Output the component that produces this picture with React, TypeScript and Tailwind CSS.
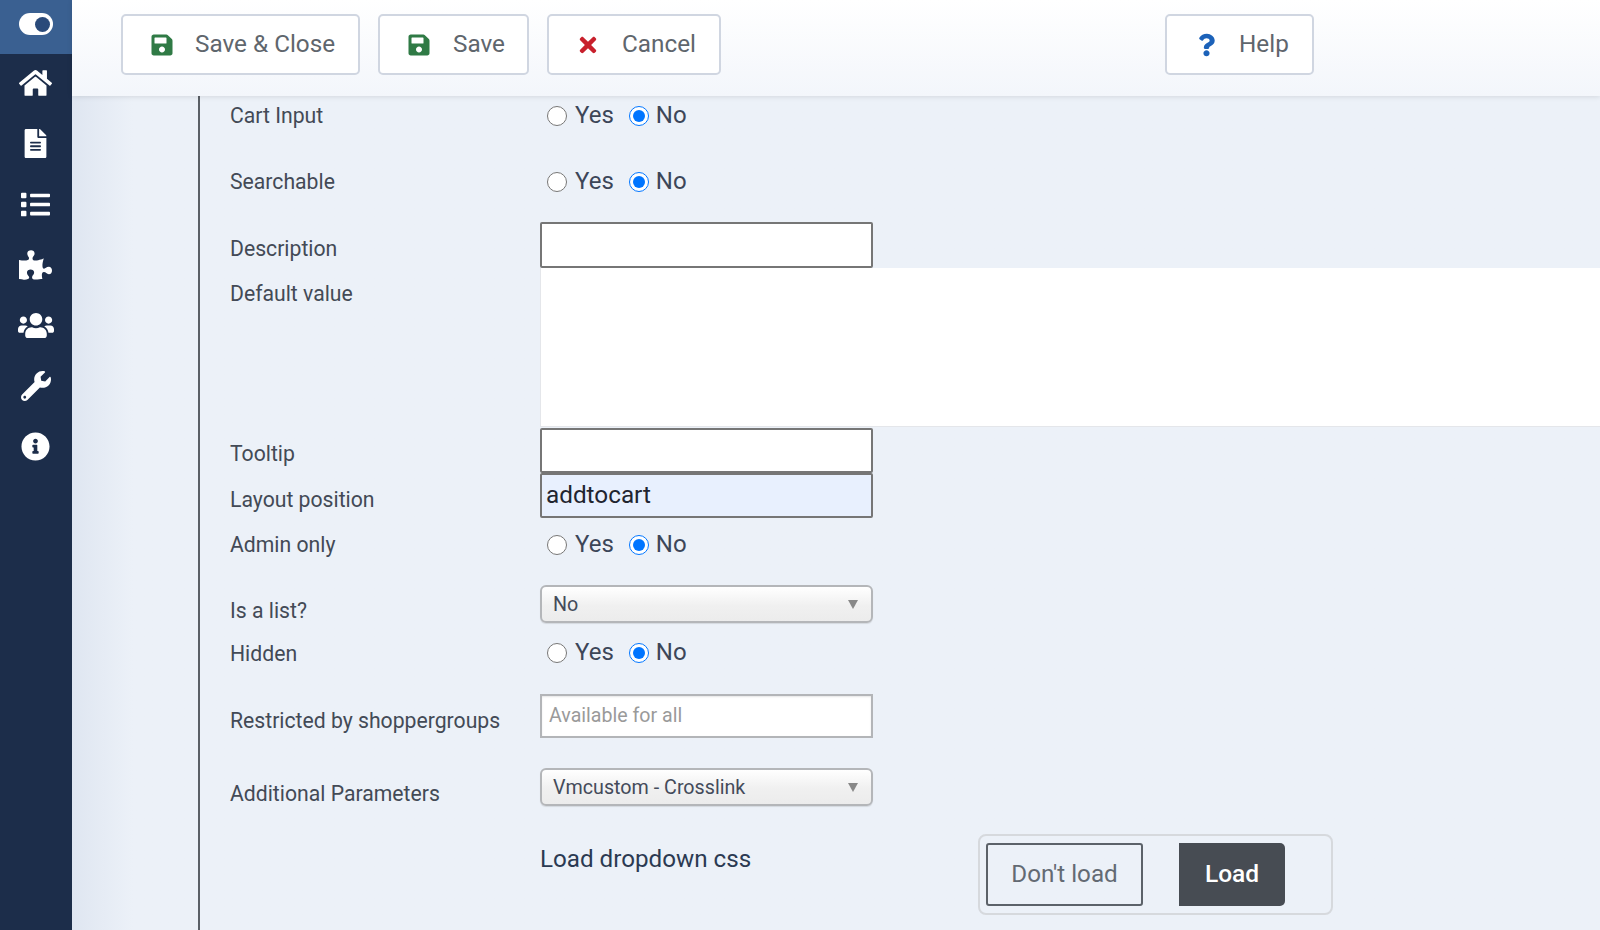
import { FaHome, FaFileAlt, FaList, FaPuzzlePiece, FaUsers, FaWrench, FaInfoCircle, FaSave, FaTimes, FaQuestion } from "react-icons/fa";
import type { ReactNode } from "react";

const navIcons = [
  <FaHome className="w-[33px] h-[30px]" />,
  <FaFileAlt className="w-[23px] h-[29px]" />,
  <FaList className="w-[31px] h-[29px]" />,
  <FaPuzzlePiece className="w-[33px] h-[30px]" />,
  <FaUsers className="w-[36px] h-[29px]" />,
  <FaWrench className="w-[30px] h-[30px]" />,
  <FaInfoCircle className="w-[29px] h-[29px]" />,
];

function ToolButton({ icon, label, className }: { icon: ReactNode; label: string; className: string }) {
  return (
    <button className={`h-[61px] flex items-center bg-white border-2 border-[#d0d6e1] rounded-[5px] text-[24.3px] text-[#5f666d] ${className}`}>
      {icon}
      <span>{label}</span>
    </button>
  );
}

function Row({ label, height, children, labelClass = "" }: { label: string; height: string; children?: ReactNode; labelClass?: string }) {
  return (
    <div className={`flex ${height}`}>
      <div className={`w-[310px] shrink-0 text-[21.2px] leading-[28px] text-[#434a56] ${labelClass}`}>{label}</div>
      <div className="flex-1 min-w-0">{children}</div>
    </div>
  );
}

function YesNo() {
  return (
    <div className="flex items-center h-[28px] pl-[7px] text-[24px] text-[#3c4658]">
      <input type="radio" className="w-[20px] h-[20px] m-0 -mt-[1px]" />
      <span className="ml-[8px] -mt-[3px]">Yes</span>
      <input type="radio" defaultChecked className="w-[20px] h-[20px] m-0 -mt-[1px] ml-[15px]" />
      <span className="ml-[7px] -mt-[3px]">No</span>
    </div>
  );
}

function Select({ value }: { value: string }) {
  return (
    <div className="w-[333px] h-[38px] flex items-center justify-between pl-[11px] pr-[13px] rounded-[6px] border-2 border-[#b4b6b9] bg-gradient-to-b from-white via-[#f0f0f0] via-[55%] to-[#ececec] text-[19.7px] text-[#444b5a] shadow-[0_1px_1px_rgba(0,0,0,0.1)]">
      <span className="mt-[1px]">{value}</span>
      <svg width="10" height="9" viewBox="0 0 10 9" className="text-[#888888]">
        <polygon points="0,0 10,0 5,9" fill="currentColor" />
      </svg>
    </div>
  );
}

export default function App() {
  return (
    <div className="flex w-full h-[930px] overflow-hidden bg-[#ecf1f8] font-['Roboto',sans-serif]">
      {/* Sidebar */}
      <aside className="w-[72px] shrink-0 bg-[#1c2d4a] text-white flex flex-col">
        <div className="h-[54px] bg-[#3a6091] flex items-start justify-center pt-[13px]">
          <div className="w-[34px] h-[22px] bg-white rounded-full flex items-center justify-end pr-[3px]">
            <div className="w-[15px] h-[15px] rounded-full bg-[#2a4a7a]"></div>
          </div>
        </div>
        {navIcons.map((icon, i) => (
          <div key={i} className="h-[60.5px] flex items-center justify-center pr-[1px] pb-[2px]">
            {icon}
          </div>
        ))}
      </aside>

      <div className="flex-1 min-w-0 flex flex-col">
        {/* Toolbar */}
        <header className="relative z-10 h-[96px] shrink-0 bg-gradient-to-b from-white to-[#f3f6fb] shadow-[0_1px_5px_rgba(0,0,0,0.1)] flex items-start pt-[14px] pl-[49px]">
          <ToolButton
            className="w-[239px] pl-[28px]"
            label="Save & Close"
            icon={<FaSave className="w-[22px] h-[24px] text-[#2f7a45] mr-[22px]" />}
          />
          <ToolButton
            className="w-[151px] pl-[28px] ml-[18px]"
            label="Save"
            icon={<FaSave className="w-[22px] h-[24px] text-[#2f7a45] mr-[23px]" />}
          />
          <ToolButton
            className="w-[174px] pl-[30px] ml-[18px]"
            label="Cancel"
            icon={<FaTimes className="w-[18px] h-[24px] text-[#c8202c] mr-[25px]" />}
          />
          <ToolButton
            className="w-[149px] pl-[31px] ml-[444px]"
            label="Help"
            icon={<FaQuestion className="w-[17px] h-[26px] text-[#1c62b9] mr-[24px]" />}
          />
        </header>

        {/* Form */}
        <main className="flex-1 flex min-h-0 bg-gradient-to-r from-[#dfe6f1] via-[#ecf1f8] via-[4%] to-[#ecf1f8]">
          <div className="ml-[126px] w-[2px] bg-[#5a5f66] shrink-0"></div>
          <div className="flex-1 min-w-0 pl-[30px] pt-[6px]">
            <Row label="Cart Input" height="h-[66px]"><YesNo /></Row>
            <Row label="Searchable" height="h-[54px]"><YesNo /></Row>
            <Row label="Description" height="h-[46px]" labelClass="pt-[13px]">
              <div className="w-[333px] h-[46px] bg-white border-2 border-[#767676] rounded-[2px]"></div>
            </Row>
            <Row label="Default value" height="h-[160px]" labelClass="pt-[12px]">
              <div className="h-[159px] bg-white border-b border-l border-[#e4e6ea]"></div>
            </Row>
            <Row label="Tooltip" height="h-[45px]" labelClass="pt-[12px]">
              <div className="w-[333px] h-[45px] bg-white border-2 border-[#767676] rounded-[2px]"></div>
            </Row>
            <Row label="Layout position" height="h-[46px]" labelClass="pt-[13px]">
              <div className="w-[333px] h-[45px] bg-[#e8f0fe] border-2 border-[#767676] rounded-[2px] flex items-center pl-[4px] text-[24.3px] text-[#1f2530]">addtocart</div>
            </Row>
            <Row label="Admin only" height="h-[66px]" labelClass="pt-[12px]">
              <div className="pt-[12px]"><YesNo /></div>
            </Row>
            <Row label="Is a list?" height="h-[43px]" labelClass="pt-[12px]">
              <Select value="No" />
            </Row>
            <Row label="Hidden" height="h-[65px]" labelClass="pt-[12px]">
              <div className="pt-[11px]"><YesNo /></div>
            </Row>
            <Row label="Restricted by shoppergroups" height="h-[75px]" labelClass="pt-[14px]">
              <div className="w-[333px] h-[44px] mt-[1px] bg-white border-2 border-[#b3b5b8] shadow-[inset_0_1px_2px_rgba(0,0,0,0.1)] flex items-center pl-[7px] text-[19.6px] text-[#9a9a9a]">Available for all</div>
            </Row>
            <Row label="Additional Parameters" height="h-[66px]" labelClass="pt-[12px]">
              <Select value="Vmcustom - Crosslink" />
            </Row>
            <div className="flex pl-[310px]">
              <div className="w-[438px] pt-[8px] text-[24.2px] text-[#2b3a52] leading-[34px]">Load dropdown css</div>
              <div className="w-[355px] h-[81px] border-2 border-[#d6d9dd] rounded-[8px] flex items-center pl-[6px]">
                <button className="w-[157px] h-[63px] rounded-[3px] border-2 border-[#5c6269] text-[24.2px] text-[#636a73]">Don't load</button>
                <button className="w-[106px] h-[63px] ml-[36px] rounded-r-[5px] bg-[#474c53] text-white text-[24.5px] font-medium">Load</button>
              </div>
            </div>
          </div>
        </main>
      </div>
    </div>
  );
}
